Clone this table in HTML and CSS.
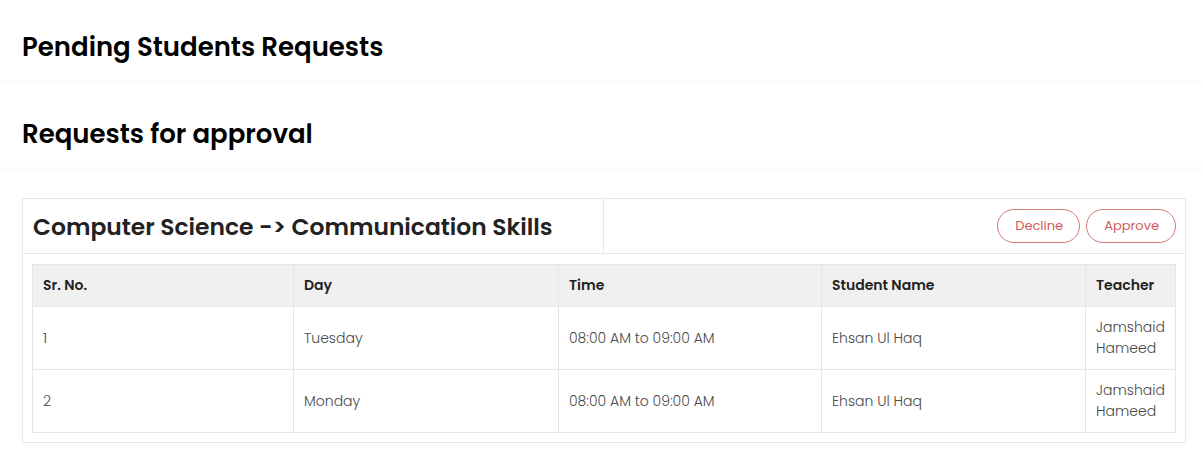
FILE: index.html
```html
<!DOCTYPE html>
<html lang="en">
<head>
<meta charset="utf-8">
<title>Pending Students Requests</title>
<link rel="stylesheet" href="styles.css">
</head>
<body>
  <header class="section">
    <h1 class="section-title">Pending Students Requests</h1>
  </header>
  <section class="section">
    <h2 class="section-title">Requests for approval</h2>
  </section>
  <main class="content">
    <div class="card">
      <div class="card-head">
        <div class="card-title">Computer Science -&gt; Communication Skills</div>
        <div class="card-actions">
          <button class="btn-outline" type="button">Decline</button>
          <button class="btn-outline" type="button">Approve</button>
        </div>
      </div>
      <div class="card-body">
        <table class="req-table">
          <thead>
            <tr>
              <th class="col-sr">Sr. No.</th>
              <th class="col-day">Day</th>
              <th class="col-time">Time</th>
              <th class="col-name">Student Name</th>
              <th class="col-teacher">Teacher</th>
            </tr>
          </thead>
          <tbody>
            <tr>
              <td>1</td>
              <td>Tuesday</td>
              <td>08:00 AM to 09:00 AM</td>
              <td>Ehsan Ul Haq</td>
              <td>Jamshaid Hameed</td>
            </tr>
            <tr>
              <td>2</td>
              <td>Monday</td>
              <td>08:00 AM to 09:00 AM</td>
              <td>Ehsan Ul Haq</td>
              <td>Jamshaid Hameed</td>
            </tr>
          </tbody>
        </table>
      </div>
    </div>
  </main>
</body>
</html>
```

FILE: styles.css
```css
* { box-sizing: border-box; }

html, body {
  margin: 0;
  padding: 0;
  background: #ffffff;
}

body {
  font-family: "Poppins", "Inter", "Open Sans", sans-serif;
  color: #222;
}

.section {
  height: 80px;
  padding: 32px 22px 0;
  background: #ffffff;
  margin-bottom: 7px;
  box-shadow: 0 4px 6px rgba(0, 0, 0, 0.025);
}

.section-title {
  margin: 0;
  font-size: 26px;
  line-height: 31px;
  font-weight: 600;
  color: #000;
}

.content {
  padding: 24px 17px 0 22px;
}

.card {
  border: 1px solid #e8e8e8;
  background: #fff;
}

.card-head {
  display: flex;
  height: 55px;
  border-bottom: 1px solid #e8e8e8;
}

.card-title {
  width: 50%;
  display: flex;
  align-items: center;
  padding-left: 10px;
  border-right: 1px solid #e8e8e8;
  font-size: 23.4px;
  font-weight: 600;
  color: #222;
}

.card-actions {
  flex: 1;
  display: flex;
  justify-content: flex-end;
  align-items: center;
  gap: 6px;
  padding-right: 9px;
}

.btn-outline {
  height: 34px;
  padding: 0 16px 0 17px;
  border: 1px solid #d77a7a;
  border-radius: 17px;
  background: #fff;
  color: #d25c5c;
  font-family: inherit;
  font-size: 13px;
  font-weight: 400;
}

.card-body {
  padding: 10px 9px 9px 9px;
}

.req-table {
  width: 100%;
  border-collapse: collapse;
  table-layout: fixed;
  border: 1px solid #e6e6e6;
}

.req-table th,
.req-table td {
  padding: 10px;
  border: 1px solid #e6e6e6;
  text-align: left;
  vertical-align: middle;
  font-size: 14px;
  line-height: 21px;
}

.req-table th {
  background: #f0f0f0;
  font-weight: 600;
  color: #222;
}

.req-table td {
  font-weight: 300;
  color: #4a4a4a;
}

.col-sr { width: 261px; }
.col-day { width: 265px; }
.col-time { width: 263px; }
.col-name { width: 264px; }
```
